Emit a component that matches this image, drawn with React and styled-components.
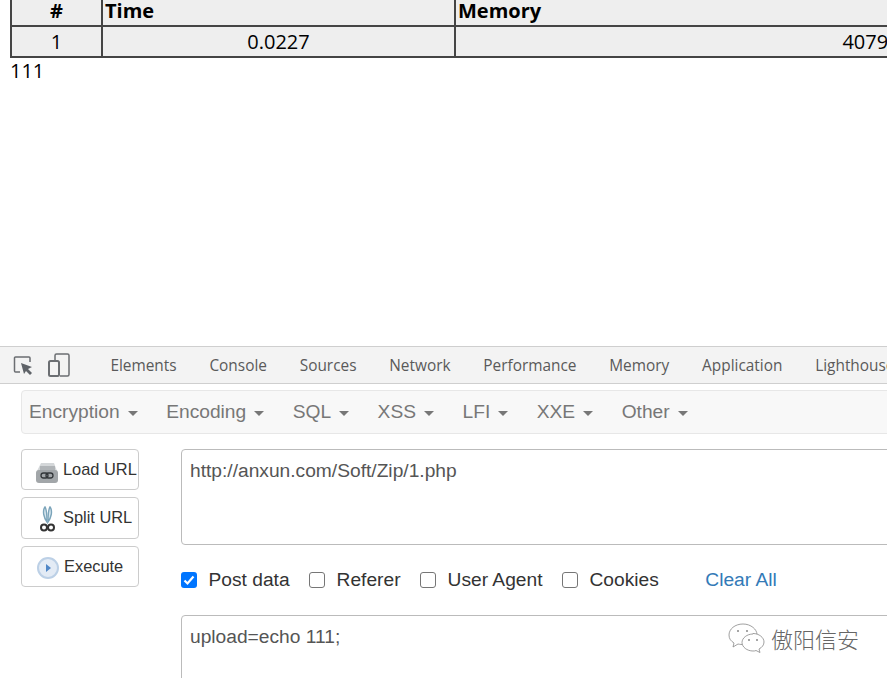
import styled, { createGlobalStyle } from "styled-components";

const Global = createGlobalStyle`
  html, body {
    margin: 0;
    padding: 0;
    background: #fff;
  }
`;

const Page = styled.div`
  width: 887px;
  height: 678px;
  overflow: hidden;
  position: relative;
  display: flex;
  flex-direction: column;
`;

const Viewport = styled.div`
  height: 346px;
  flex-shrink: 0;
  padding-left: 10px;
  font-family: "Open Sans", "Noto Sans", sans-serif;
  font-size: 20px;
  color: #000;
  overflow: hidden;
`;

const ResultTable = styled.div`
  display: grid;
  grid-template-columns: 91px 353px 457px;
  width: 907px;
  margin-top: -7px;
  border: 2px solid #444;
  background: #eeeeee;
`;

const Cell = styled.div`
  height: ${(p) => (p.$head ? "30px" : "29px")};
  line-height: ${(p) => (p.$head ? "31px" : "30px")};
  padding: 0 2px;
  font-weight: ${(p) => (p.$head ? 700 : 400)};
  text-align: ${(p) => p.$align || "left"};
  border-right: ${(p) => (p.$last ? "0" : "2px solid #444")};
  border-bottom: ${(p) => (p.$head ? "2px solid #444" : "0")};
  white-space: nowrap;
  overflow: hidden;
`;

const Output = styled.div`
  line-height: 26px;
`;

const TabBar = styled.div`
  height: 36px;
  flex-shrink: 0;
  display: flex;
  align-items: center;
  background: #f3f3f3;
  border-top: 1px solid #cfcfcf;
  border-bottom: 1px solid #cfcfcf;
  padding-left: 13px;
`;

const ToolIcon = styled.svg`
  display: block;
  flex-shrink: 0;
  margin-right: ${(p) => p.$gap}px;
`;

const Divider = styled.div`
  width: 1px;
  height: 22px;
  background: #c8c8c8;
  margin-right: 9px;
`;

const Tab = styled.div`
  font-family: "Open Sans", "Noto Sans", sans-serif;
  font-size: 15.4px;
  color: #5a5a5a;
  padding: 0 16.4px;
  white-space: nowrap;
`;

const Hackbar = styled.div`
  flex: 1;
  padding: 6px 0 0 21px;
  font-family: "Liberation Sans", Arial, sans-serif;
  color: #333;
`;

const MenuBar = styled.div`
  width: 900px;
  height: 42px;
  display: flex;
  align-items: center;
  gap: 28.5px;
  padding-left: 7px;
  background: #f8f8f8;
  border: 1px solid #e7e7e7;
  border-radius: 4px;
`;

const MenuItem = styled.div`
  display: flex;
  align-items: center;
  gap: 8px;
  font-size: 19.2px;
  color: #777;
`;

const Caret = styled.span`
  width: 0;
  height: 0;
  border-top: 5px solid #777;
  border-left: 5.5px solid transparent;
  border-right: 5.5px solid transparent;
  margin-top: 2px;
`;

const Body = styled.div`
  display: flex;
  margin-top: 15px;
  gap: 42px;
`;

const Buttons = styled.div`
  width: 118px;
  flex-shrink: 0;
  display: flex;
  flex-direction: column;
  gap: 7px;
`;

const ActionButton = styled.div`
  height: ${(p) => p.$h}px;
  box-sizing: border-box;
  display: flex;
  align-items: center;
  padding-left: ${(p) => p.$pad}px;
  gap: ${(p) => p.$gap}px;
  border: 1px solid #ccc;
  border-radius: 4px;
  font-size: 16.4px;
  color: #333;
  background: #fff;
  white-space: nowrap;
`;

const ButtonLabel = styled.span`
  margin-top: ${(p) => p.$lift || 0}px;
`;

const ButtonIcon = styled.svg`
  flex-shrink: 0;
  margin-top: ${(p) => p.$drop || 0}px;
`;

const Fields = styled.div`
  flex: 1;
  min-width: 0;
`;

const TextBox = styled.div`
  width: 900px;
  height: ${(p) => p.$h}px;
  box-sizing: border-box;
  padding: 10px 8px;
  border: 1px solid #bbb;
  border-radius: 4px;
  font-size: 19.2px;
  line-height: 22px;
  color: #555;
`;

const Options = styled.div`
  display: flex;
  align-items: center;
  height: 20px;
  margin: 25px 0;
`;

const Option = styled.div`
  display: flex;
  align-items: center;
  gap: 11.5px;
  margin-right: 19.5px;
  font-size: 19.2px;
  color: #333;
`;

const Box = styled.span`
  width: 16px;
  height: 16px;
  box-sizing: border-box;
  border-radius: 3px;
  border: ${(p) => (p.$on ? "0" : "1.5px solid #767676")};
  background: ${(p) => (p.$on ? "#0075ff" : "#fff")};
  display: flex;
  align-items: center;
  justify-content: center;
`;

const ClearLink = styled.div`
  margin-left: 27px;
  font-size: 19.2px;
  color: #337ab7;
`;

const Watermark = styled.div`
  position: absolute;
  left: 728px;
  top: 622px;
  display: flex;
  align-items: center;
  gap: 5px;
  font-family: "Noto Sans CJK SC", sans-serif;
  font-size: 22px;
  font-weight: 300;
  color: #666;
`;

const tabs = ["Elements", "Console", "Sources", "Network", "Performance", "Memory", "Application", "Lighthouse"];
const menus = ["Encryption", "Encoding", "SQL", "XSS", "LFI", "XXE", "Other"];

const App = () => {
  return (
    <Page>
      <Global />
      <Viewport>
        <ResultTable>
          <Cell $head $align="center">#</Cell>
          <Cell $head>Time</Cell>
          <Cell $head $last>Memory</Cell>
          <Cell $align="center">1</Cell>
          <Cell $align="center">0.0227</Cell>
          <Cell $align="right" $last>407920</Cell>
        </ResultTable>
        <Output>111</Output>
      </Viewport>

      <TabBar>
        <ToolIcon $gap={15} width="20" height="20" viewBox="0 0 20 20" fill="none">
          <path d="M7 17H2.500A1 1 0 0 1 1.500 16V3A1 1 0 0 1 2.500 2H16A1 1 0 0 1 17 3V7" stroke="#6b6e72" strokeWidth="1.500" />
          <path d="M8 8l11 4-4 2 4 4-2 2-4-4-2 3z" fill="#5f6368" />
        </ToolIcon>
        <ToolIcon $gap={15} width="22" height="24" viewBox="0 0 22 24" fill="none">
          <path d="M7 7V2.500A1.500 1.500 0 0 1 8.500 1H19.500A1.500 1.500 0 0 1 21 2.500V21.500A1.500 1.500 0 0 1 19.500 23H12" stroke="#6b6e72" strokeWidth="1.500" />
          <rect x="1" y="8" width="10" height="15" rx="1.500" stroke="#6b6e72" strokeWidth="2" />
        </ToolIcon>
        <Divider />
        {tabs.map((t) => (
          <Tab key={t}>{t}</Tab>
        ))}
      </TabBar>

      <Hackbar>
        <MenuBar>
          {menus.map((m) => (
            <MenuItem key={m}>
              {m}
              <Caret />
            </MenuItem>
          ))}
        </MenuBar>
        <Body>
          <Buttons>
            <ActionButton $h={41} $pad={14} $gap={5}>
              <ButtonIcon $drop={5} width="22" height="21" viewBox="0 0 22 21">
                <path d="M5 1h13l3 8H1z" fill="#d4d7d9" />
                <rect x="4" y="4" width="15" height="4" fill="#b0b4b7" />
                <rect x="0" y="8" width="22" height="13" rx="3" fill="#a2a6a9" />
                <rect x="5" y="11" width="7" height="5" rx="2.500" fill="none" stroke="#33373a" strokeWidth="1.300" />
                <rect x="10" y="11" width="7" height="5" rx="2.500" fill="none" stroke="#33373a" strokeWidth="1.300" />
              </ButtonIcon>
              <ButtonLabel>Load URL</ButtonLabel>
            </ActionButton>
            <ActionButton $h={42} $pad={18} $gap={8}>
              <ButtonIcon $drop={1} width="15" height="26" viewBox="0 0 15 26" fill="none">
                <path d="M7 16C4 12 2 5 5 1c2 3 2 9 2 15z" fill="#d7e6ee" stroke="#7ba4ba" strokeWidth="1.400" />
                <path d="M8 16c3-4 5-11 2-15-2 3-2 9-2 15z" fill="#d7e6ee" stroke="#7ba4ba" strokeWidth="1.400" />
                <circle cx="4" cy="21.500" r="3" stroke="#333" strokeWidth="2" />
                <circle cx="11" cy="21.500" r="3" stroke="#333" strokeWidth="2" />
              </ButtonIcon>
              <ButtonLabel $lift={-2}>Split URL</ButtonLabel>
            </ActionButton>
            <ActionButton $h={41} $pad={15} $gap={5}>
              <ButtonIcon $drop={2} width="22" height="22" viewBox="0 0 22 22">
                <circle cx="11" cy="11" r="10" fill="#e3ebf5" stroke="#bcd0e6" strokeWidth="2" />
                <path d="M9 7l5 4-5 4z" fill="#4f86c6" />
              </ButtonIcon>
              <ButtonLabel>Execute</ButtonLabel>
            </ActionButton>
          </Buttons>
          <Fields>
            <TextBox $h={96}>http://anxun.com/Soft/Zip/1.php</TextBox>
            <Options>
              <Option>
                <Box $on>
                  <svg width="12" height="12" viewBox="0 0 12 12" fill="none">
                    <path d="M1.500 6.500L4.500 9.500L10.500 2.500" stroke="#fff" strokeWidth="2.200" />
                  </svg>
                </Box>
                Post data
              </Option>
              <Option><Box />Referer</Option>
              <Option><Box />User Agent</Option>
              <Option><Box />Cookies</Option>
              <ClearLink>Clear All</ClearLink>
            </Options>
            <TextBox $h={120}>upload=echo 111;</TextBox>
          </Fields>
        </Body>
      </Hackbar>

      <Watermark>
        <svg width="38" height="30" viewBox="0 0 38 30" fill="#fff" stroke="#888" strokeWidth="0.800">
          <path d="M15 1C7 1 1 6 1 12c0 4 2 6 5 8l-1 4 5-3c2 .5 4 .5 5 .5 8 0 14-5 14-10S23 1 15 1z" />
          <path d="M25 11c-6 0-11 4-11 8.500S19 28 25 28c1 0 2 0 3-.5l4 2-1-3.500c3-1.500 5-4 5-7 0-4.500-5-8.500-11-8.500z" />
          <circle cx="10" cy="8" r="1" fill="#888" stroke="none" />
          <circle cx="19" cy="8" r="1" fill="#888" stroke="none" />
          <circle cx="21" cy="17" r="1" fill="#888" stroke="none" />
          <circle cx="29" cy="17" r="1" fill="#888" stroke="none" />
        </svg>
        傲阳信安
      </Watermark>
    </Page>
  );
};

export default App;
